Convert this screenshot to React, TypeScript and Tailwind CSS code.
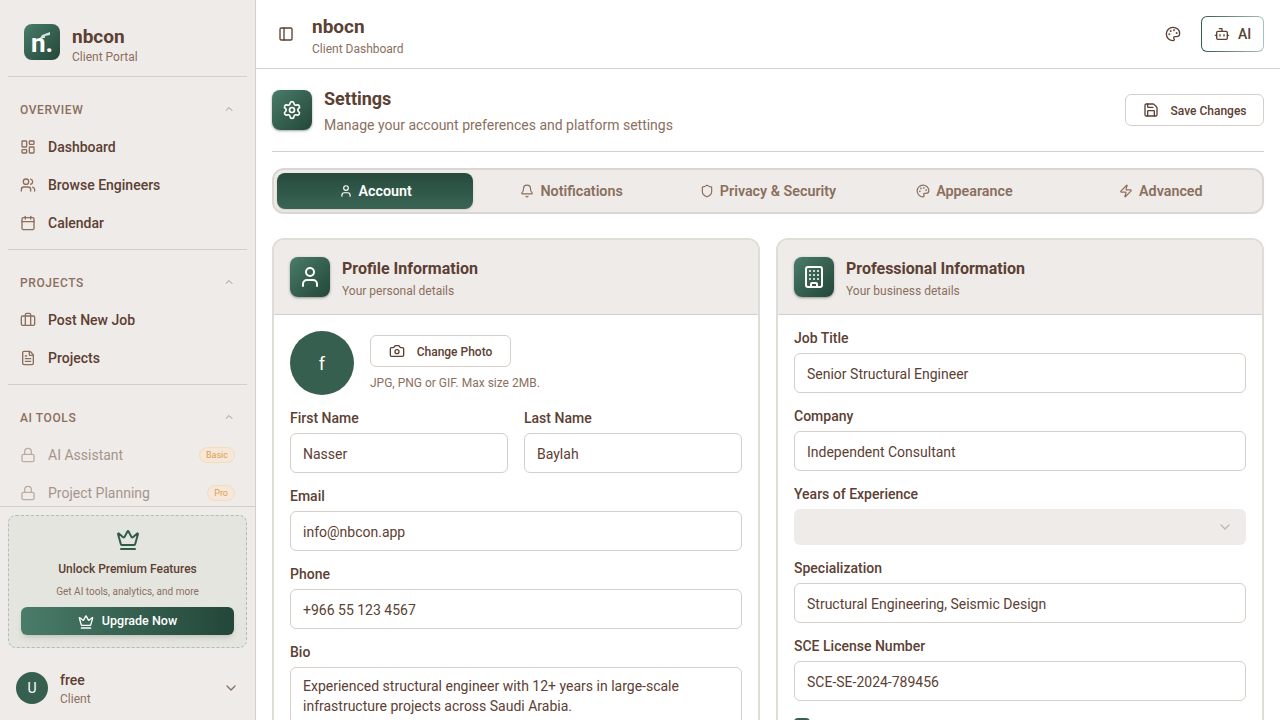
import React from 'react';
import {
  Bell, Bot, Briefcase, Building, Calendar, Camera, ChevronDown, ChevronUp, Crown, FileText,
  LayoutDashboard, Lock, Palette, PanelLeft, Save, Settings, Shield, User, Users, Zap,
} from 'lucide-react';

// Sidebar group with a collapsible-looking heading
const NavGroup: React.FC<{ title: string; border?: boolean; children: React.ReactNode }> = ({ title, border = true, children }) => (
  <div className={border ? 'mx-2 border-b border-[#d6cec8] pt-4 pb-[7px]' : 'mx-2 pt-4'}>
    <div className="mb-[3px] flex h-8 items-center justify-between pt-[2px] pr-3 pl-3 text-[12px] font-medium tracking-[0.6px] text-[#8b6f5e]">
      {title}
      <ChevronUp className="-mt-[2px] h-3 w-3 opacity-70" />
    </div>
    {children}
  </div>
);

const NavItem: React.FC<{ icon: React.ElementType; label: string }> = ({ icon: Icon, label }) => (
  <div className="flex h-[38px] items-center gap-3 pl-3 text-[14px] font-medium text-[#5c4033]">
    <Icon className="h-4 w-4 text-[#8b6f5e]" strokeWidth={2} />
    {label}
  </div>
);

const LockedItem: React.FC<{ label: string; badge: string }> = ({ label, badge }) => (
  <div className="flex h-[38px] items-center gap-3 px-3 text-[14px] text-[#5c4033]">
    <Lock className="h-4 w-4 text-[#8b6f5e] opacity-50" />
    <span className="flex-1 opacity-50">{label}</span>
    <span className="rounded-full border border-[#f4dcc0] bg-[#f6e8d8] px-[6px] text-[9px] leading-[14px] text-[#e09c4f]">{badge}</span>
  </div>
);

const Field: React.FC<{ label: string; value: string; className?: string }> = ({ label, value, className }) => (
  <div className={className}>
    <label className="mb-[5px] block text-[14px] leading-5 font-medium text-[#5c4033]">{label}</label>
    <input
      readOnly
      value={value}
      className="h-10 w-full rounded-md border border-[#d6cec8] bg-white px-3 pt-[2px] text-[14px] text-[#5c4033] outline-none"
    />
  </div>
);

const CardHeader: React.FC<{ icon: React.ElementType; title: string; subtitle: string }> = ({ icon: Icon, title, subtitle }) => (
  <div className="flex h-[75px] items-center gap-3 border-b border-[#d6cec8] bg-[#efebe8] px-4">
    <div className="flex h-10 w-10 items-center justify-center rounded-lg bg-gradient-to-br from-[#4a7c6a] to-[#234739] shadow-sm shadow-black/30">
      <Icon className="h-6 w-6 text-white" strokeWidth={2} />
    </div>
    <div className="pt-[2px]">
      <div className="text-[16px] leading-6 font-bold text-[#5c4033]">{title}</div>
      <div className="mt-[2px] text-[12px] leading-4 text-[#8b6f5e]">{subtitle}</div>
    </div>
  </div>
);

const tabs = [
  { icon: User, label: 'Account', active: true },
  { icon: Bell, label: 'Notifications' },
  { icon: Shield, label: 'Privacy & Security' },
  { icon: Palette, label: 'Appearance' },
  { icon: Zap, label: 'Advanced' },
];

export default function App() {
  return (
    <div className="flex h-screen overflow-hidden bg-white font-['Roboto',sans-serif]">
      {/* Sidebar */}
      <aside className="flex w-[256px] shrink-0 flex-col border-r border-[#d6cec8] bg-[#efebe8]">
        <div className="mx-2 flex h-[77px] shrink-0 items-start gap-3 border-b border-[#d6cec8] px-4 pt-6">
          <div className="relative flex h-9 w-9 items-end justify-center overflow-hidden rounded-lg bg-gradient-to-br from-[#4a7c6a] to-[#234739]">
            <span className="text-[26px] leading-[33px] font-bold text-white">n.</span>
            <svg className="absolute inset-0 h-9 w-9" viewBox="0 0 36 36">
              <path d="M16 14 L18 11 L26 8 L26 11 L21 12 L21 14 Z" fill="#cfe3da" />
            </svg>
          </div>
          <div>
            <div className="mt-[1px] text-[19px] leading-6 font-bold text-[#5c4033]">nbcon</div>
            <div className="text-[12px] leading-4 text-[#8b6f5e]">Client Portal</div>
          </div>
        </div>
        <div className="min-h-0 flex-1 overflow-hidden">
          <NavGroup title="OVERVIEW">
            <NavItem icon={LayoutDashboard} label="Dashboard" />
            <NavItem icon={Users} label="Browse Engineers" />
            <NavItem icon={Calendar} label="Calendar" />
          </NavGroup>
          <NavGroup title="PROJECTS">
            <NavItem icon={Briefcase} label="Post New Job" />
            <NavItem icon={FileText} label="Projects" />
          </NavGroup>
          <NavGroup title="AI TOOLS" border={false}>
            <LockedItem label="AI Assistant" badge="Basic" />
            <LockedItem label="Project Planning" badge="Pro" />
          </NavGroup>
        </div>
        <div className="shrink-0 border-t border-[#d6cec8] px-2 pt-2">
          <div className="flex h-[133px] flex-col items-center rounded-lg border border-dashed border-[#b5bcb5] bg-[#e5e5e0] px-3 pt-[12px]">
            <Crown className="h-6 w-6 text-[#2f5c4c]" />
            <div className="mt-[7px] text-[12px] leading-5 font-medium text-[#5c4033]">Unlock Premium Features</div>
            <div className="mt-[3px] text-[10px] leading-5 text-[#8b6f5e]">Get AI tools, analytics, and more</div>
            <div className="mt-[5px] flex h-7 w-full items-center justify-center gap-2 rounded-md bg-gradient-to-r from-[#4a7c6a] to-[#234739] pt-[1px] text-[12.5px] font-medium text-white shadow-md">
              <Crown className="h-4 w-4" />
              Upgrade Now
            </div>
          </div>
          <div className="flex h-[72px] items-center gap-3 pt-2 pr-2 pl-2">
            <div className="flex h-8 w-8 items-center justify-center rounded-full bg-[#365f50] text-[14px] text-white">U</div>
            <div className="flex-1">
              <div className="text-[14px] leading-5 font-medium text-[#5c4033]">free</div>
              <div className="mt-[1px] text-[12px] leading-4 text-[#8b6f5e]">Client</div>
            </div>
            <ChevronDown className="h-4 w-4 text-[#8b6f5e]" />
          </div>
        </div>
      </aside>

      <div className="flex min-w-0 flex-1 flex-col">
        {/* Top bar */}
        <header className="flex h-[69px] shrink-0 items-center border-b border-[#d6cec8] pr-4 pl-[22px]">
          <PanelLeft className="h-4 w-4 text-[#5c4033]" />
          <div className="mt-1 ml-[18px] flex-1">
            <div className="text-[19px] leading-[24px] font-bold text-[#5c4033]">nbocn</div>
            <div className="mt-[2px] text-[12px] leading-4 text-[#8b6f5e]">Client Dashboard</div>
          </div>
          <Palette className="h-4 w-4 text-[#5c4033]" />
          <div className="ml-5 h-9 w-[63px] rounded-md bg-gradient-to-r from-[#2f5c4c] to-[#a9c2b8] p-px">
            <div className="flex h-full items-center justify-center gap-2 rounded-[5px] bg-white text-[14px] font-medium text-[#5c4033]">
              <Bot className="h-4 w-4" />
              AI
            </div>
          </div>
        </header>

        <main className="min-h-0 flex-1 overflow-hidden p-4 pt-[21px]">
          {/* Page heading */}
          <div className="flex items-start border-b border-[#d6cec8] pb-4">
            <div className="flex h-10 w-10 items-center justify-center rounded-lg bg-gradient-to-br from-[#4a7c6a] to-[#234739] shadow-sm shadow-black/30">
              <Settings className="h-5 w-5 text-white" />
            </div>
            <div className="ml-3 flex-1">
              <div className="-mt-[3px] text-[18px] leading-6 font-bold text-[#5c4033]">Settings</div>
              <div className="mt-[4px] text-[14px] leading-5 text-[#8b6f5e]">Manage your account preferences and platform settings</div>
            </div>
            <div className="mt-[4px] flex h-8 w-[139px] items-center justify-center gap-3 rounded-md border border-[#d6cec8] text-[12px] font-medium text-[#5c4033]">
              <Save className="h-4 w-4" />
              <span className="mt-[2px]">Save Changes</span>
            </div>
          </div>

          {/* Tabs */}
          <div className="mt-4 flex h-[46px] rounded-xl border-2 border-[#dcd6d0] bg-[#efebe8] p-[3px]">
            {tabs.map(({ icon: Icon, label, active }) => (
              <div
                key={label}
                className={
                  active
                    ? 'flex flex-1 items-center justify-center gap-[6px] rounded-lg bg-gradient-to-b from-[#264a3c] to-[#3a6554] text-[14.3px] font-semibold text-white shadow-sm'
                    : 'flex flex-1 items-center justify-center gap-[6px] text-[14.3px] font-semibold text-[#8b6f5e]'
                }
              >
                <Icon className="h-[14px] w-[14px]" />
                <span className="mt-[2px]">{label}</span>
              </div>
            ))}
          </div>

          {/* Cards */}
          <div className="mt-6 grid grid-cols-2 gap-4">
            <section className="overflow-hidden rounded-xl border-2 border-[#e0dcd6] bg-white">
              <CardHeader icon={User} title="Profile Information" subtitle="Your personal details" />
              <div className="flex flex-col gap-[13px] px-4 pt-4">
                <div className="flex items-start gap-4">
                  <div className="flex h-16 w-16 items-center justify-center rounded-full bg-[#365f50] text-[18px] text-white">f</div>
                  <div className="pt-1">
                    <div className="flex h-8 w-[141px] items-center justify-center gap-3 rounded-md border border-[#d6cec8] text-[12px] font-medium text-[#5c4033]">
                      <Camera className="h-4 w-4" />
                      <span className="mt-[2px]">Change Photo</span>
                    </div>
                    <div className="mt-2 text-[12px] leading-4 text-[#8b6f5e]">JPG, PNG or GIF. Max size 2MB.</div>
                  </div>
                </div>
                <div className="grid grid-cols-2 gap-4">
                  <Field label="First Name" value="Nasser" />
                  <Field label="Last Name" value="Baylah" />
                </div>
                <Field label="Email" value="info@nbcon.app" />
                <Field label="Phone" value="+966 55 123 4567" />
                <div>
                  <label className="mb-[5px] block text-[14px] leading-5 font-medium text-[#5c4033]">Bio</label>
                  <textarea
                    readOnly
                    rows={4}
                    value="Experienced structural engineer with 12+ years in large-scale infrastructure projects across Saudi Arabia."
                    className="w-full resize-none rounded-md border border-[#d6cec8] bg-white px-3 py-2 text-[14px] leading-5 text-[#5c4033] outline-none"
                  />
                </div>
              </div>
            </section>

            <section className="overflow-hidden rounded-xl border-2 border-[#e0dcd6] bg-white">
              <CardHeader icon={Building} title="Professional Information" subtitle="Your business details" />
              <div className="flex flex-col gap-[13px] px-4 pt-[13px]">
                <Field label="Job Title" value="Senior Structural Engineer" />
                <Field label="Company" value="Independent Consultant" />
                <div>
                  <label className="mb-[5px] block text-[14px] leading-5 font-medium text-[#5c4033]">Years of Experience</label>
                  <div className="flex h-9 items-center justify-end rounded-md bg-[#efebe8] px-[13px]">
                    <ChevronDown className="h-4 w-4 text-[#5c4033] opacity-30" />
                  </div>
                </div>
                <Field label="Specialization" value="Structural Engineering, Seismic Design" />
                <Field label="SCE License Number" value="SCE-SE-2024-789456" />
                <div className="flex items-center gap-2 pt-1">
                  <div className="h-4 w-4 rounded-[4px] bg-[#365f50]" />
                </div>
              </div>
            </section>
          </div>
        </main>
      </div>
    </div>
  );
}
